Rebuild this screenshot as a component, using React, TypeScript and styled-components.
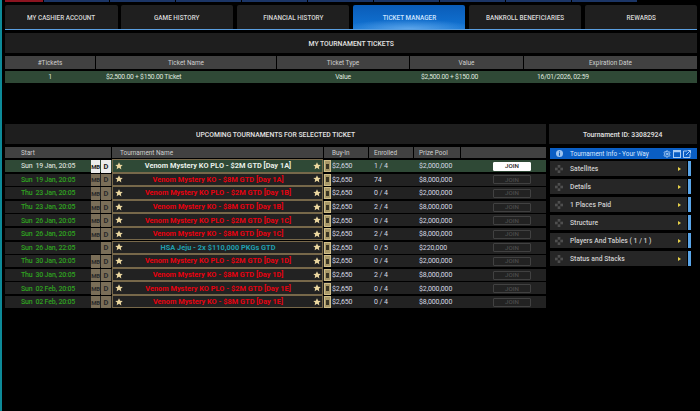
import React from "react";
import styled, { createGlobalStyle } from "styled-components";
import { Settings } from "lucide-react";

const Global = createGlobalStyle`
  html, body { margin: 0; padding: 0; background: #000; }
  * { box-sizing: border-box; }
`;

const Page = styled.div`
  width: 700px;
  height: 411px;
  overflow: hidden;
  background: #000;
  border-left: 2px solid #0d8a98;
  font-family: Roboto, "Liberation Sans", sans-serif;
  color: #e6e6e6;
  display: flex;
  flex-direction: column;
`;

const TopStrip = styled.div`
  height: 2px;
  display: flex;
  padding-left: 3px;
  gap: 1px;
`;
const StripPiece = styled.div<{ $w: number; $red?: boolean }>`
  width: ${p => p.$w}px;
  background: ${p => (p.$red ? "#8c1420" : "#1b3566")};
`;

const Tabs = styled.div`
  margin: 3px 3px 0 3px;
  display: flex;
  gap: 3.4px;
  height: 25px;
  border-bottom: 1px solid #5b9fe0;
`;
const Tab = styled.div<{ $active?: boolean }>`
  flex: 1;
  display: flex;
  align-items: center;
  justify-content: center;
  border-radius: 2px 2px 0 0;
  font-size: 7.5px;
  font-weight: 500;
  white-space: nowrap;
  color: ${p => (p.$active ? "#cfe4ff" : "#d8d8d8")};
  background: ${p =>
    p.$active
      ? "radial-gradient(ellipse 60% 40% at 50% 100%, #5ea6ea 0%, transparent 100%), linear-gradient(#0a5cb8, #1274d4)"
      : "#1f1f1f"};
`;

const Narrow = styled.span`
  display: inline-block;
  transform: scaleX(0.85);
`;

const Title = styled.div`
  height: 20px;
  background: #1e1e1e;
  display: flex;
  align-items: center;
  justify-content: center;
  font-size: 8px;
  font-weight: 500;
  white-space: nowrap;
  color: #e4e4e4;
`;

const TicketSection = styled.section`
  margin: 3px 3px 0 3px;
  height: 91px;
`;

const TicketHead = styled.div`
  margin-top: 3px;
  height: 13px;
  display: grid;
  grid-template-columns: 90px 180px 132px 113px 1fr;
  gap: 1px;
`;
const HeadCell = styled.div<{ $left?: number }>`
  background: #414141;
  font-size: 6.4px;
  color: #cfcfcf;
  display: flex;
  align-items: center;
  justify-content: ${p => (p.$left !== undefined ? "flex-start" : "center")};
  padding-left: ${p => p.$left ?? 0}px;
  white-space: nowrap;
`;
const TicketRow = styled.div`
  margin-top: 2px;
  height: 12px;
  display: grid;
  grid-template-columns: 90px 180px 132px 113px 1fr;
  gap: 1px;
  background: #2f4936;
`;
const TicketCell = styled.div<{ $left?: number }>`
  font-size: 6.8px;
  letter-spacing: -0.25px;
  color: #dfe6df;
  display: flex;
  align-items: center;
  justify-content: ${p => (p.$left !== undefined ? "flex-start" : "center")};
  padding-left: ${p => p.$left ?? 0}px;
  white-space: nowrap;
`;

const Lower = styled.div`
  margin: 0 3px 0 3px;
  display: flex;
  gap: 3px;
`;
const Tournaments = styled.section`
  width: 541px;
`;
const ListHead = styled.div`
  margin-top: 3px;
  height: 11px;
  display: grid;
  grid-template-columns: 106px 211px 44px 44px 46px 1fr;
  gap: 1px;
`;
const Rows = styled.div`
  margin-top: 2px;
  display: flex;
  flex-direction: column;
  gap: 1.6px;
`;
const Row = styled.div<{ $selected?: boolean }>`
  height: 12px;
  display: grid;
  grid-template-columns: 86px 21px 211px 9px 37px 50px 74px 1fr;
  align-items: center;
  background: ${p => (p.$selected ? "#2f4936" : "#222222")};
  font-size: 7px;
  letter-spacing: -0.1px;
  color: #d6d9e4;
`;
const StartCell = styled.div<{ $selected?: boolean }>`
  color: ${p => (p.$selected ? "#cfd8cf" : "#2fa320")};
  font-weight: 500;
  letter-spacing: -0.2px;
  padding-left: 16px;
  white-space: pre;
`;
const Badges = styled.div`
  display: flex;
  justify-content: flex-end;
  gap: 1px;
  height: 100%;
  padding-right: 1px;
`;
const Badge = styled.span<{ $wide?: boolean; $on?: boolean }>`
  width: ${p => (p.$wide ? 9 : 10)}px;
  display: flex;
  align-items: center;
  justify-content: center;
  font-size: ${p => (p.$wide ? 6 : 7.5)}px;
  font-weight: 700;
  letter-spacing: ${p => (p.$wide ? -0.4 : 0)}px;
  background: ${p => (p.$on ? "#ececec" : "#7a6e58")};
  color: ${p => (p.$on ? "#222" : "#2b2b2b")};
`;
const NameCell = styled.div<{ $selected?: boolean }>`
  height: 13.5px;
  margin-top: -1px;
  display: flex;
  align-items: center;
  padding: 0 1px 0 2px;
  border: 1px solid #77684a;
  background: ${p => (p.$selected ? "#2f4936" : "#222")};
`;
const NameText = styled.div<{ $tone: "white" | "red" | "teal" }>`
  flex: 1;
  text-align: center;
  font-size: 7.4px;
  font-weight: 700;
  letter-spacing: 0;
  white-space: nowrap;
  color: ${p => (p.$tone === "white" ? "#e8efe8" : p.$tone === "red" ? "#e8000f" : "#1f9fb0")};
`;
const Scroll = styled.span`
  width: 7px;
  height: 12px;
  margin-left: 1px;
  background: #a89868;
  border: 1px solid #d0be88;
  display: flex;
  align-items: center;
  justify-content: center;
  &::after {
    content: "";
    width: 3px;
    height: 5px;
    background: #3a3524;
  }
`;
const Plain = styled.div`
  white-space: nowrap;
`;
const EnrolledCell = styled.div`
  padding-left: 5px;
  white-space: nowrap;
`;
const PrizeCell = styled.div`
  white-space: nowrap;
`;
const JoinWrap = styled.div`
  display: flex;
`;
const Join = styled.button<{ $on?: boolean }>`
  width: 38px;
  height: 9px;
  padding: 0;
  font-family: inherit;
  font-size: 6.2px;
  font-weight: 500;
  border-radius: 1px;
  border: 1px solid ${p => (p.$on ? "#fff" : "#414141")};
  background: ${p => (p.$on ? "#fff" : "#222")};
  color: ${p => (p.$on ? "#222" : "#4b4b4b")};
  display: flex;
  align-items: center;
  justify-content: center;
`;

const Side = styled.aside`
  width: 148px;
`;
const InfoBar = styled.div`
  margin: 4px 0 0 1px;
  height: 11px;
  background: #0a5ec4;
  display: flex;
  align-items: center;
  padding: 0 6px 0 6px;
  font-size: 6.4px;
  color: #d9e8ff;
`;
const InfoLabel = styled.span`
  flex: 1;
  padding-left: 7px;
  white-space: nowrap;
`;
const InfoIcons = styled.span`
  display: flex;
  gap: 2px;
  align-items: center;
`;
const Items = styled.div`
  margin-top: 2px;
  display: flex;
  flex-direction: column;
  gap: 3px;
`;
const ItemRow = styled.div`
  display: flex;
  align-items: stretch;
  gap: 1px;
  height: 15px;
`;
const Item = styled.div`
  margin-left: 1px;
  width: 137px;
  background: #262626;
  display: flex;
  align-items: center;
  padding: 0 6px 0 5px;
  font-size: 6.8px;
  font-weight: 500;
  color: #cfcfcf;
`;
const ItemLabel = styled.span`
  flex: 1;
  padding-left: 7px;
  white-space: nowrap;
`;
const Arrow = styled.span`
  width: 0;
  height: 0;
  border-left: 3px solid #e8d24a;
  border-top: 2.5px solid transparent;
  border-bottom: 2.5px solid transparent;
`;
const Marker = styled.div`
  width: 3px;
  background: #5aa5e8;
`;

const Star = () => (
  <svg width="8" height="8" viewBox="0 0 24 24" style={{ flexShrink: 0 }}>
    <path fill="#ecd8a0" d="M12 1l3.4 7.2 7.8 1-5.7 5.4 1.5 7.8L12 17.6 5 21.4l1.5-7.8L.8 9.2l7.8-1z" />
  </svg>
);

const DragIcon = () => (
  <svg width="8" height="8" viewBox="0 0 9 9" style={{ flexShrink: 0 }}>
    <g fill="#4f4f4f">
      <rect x="3" y="0" width="3" height="3" />
      <rect x="0" y="3" width="3" height="3" />
      <rect x="6" y="3" width="3" height="3" />
      <rect x="3" y="6" width="3" height="3" />
    </g>
  </svg>
);

const InfoIcon = () => (
  <svg width="7" height="7" viewBox="0 0 16 16" style={{ flexShrink: 0 }}>
    <circle cx="8" cy="8" r="8" fill="#9cc4f0" />
    <rect x="6.8" y="7" width="2.4" height="6" fill="#0a5ec4" />
    <rect x="6.8" y="3.2" width="2.4" height="2.4" fill="#0a5ec4" />
  </svg>
);
const SquareIcon = () => (
  <svg width="8" height="8" viewBox="0 0 16 16">
    <rect x="1" y="1" width="14" height="14" fill="none" stroke="#a9cdf5" strokeWidth="2" />
    <rect x="1" y="1" width="14" height="3.5" fill="#a9cdf5" />
  </svg>
);
const PopIcon = () => (
  <svg width="8" height="8" viewBox="0 0 16 16" fill="none" stroke="#a9cdf5" strokeWidth="2">
    <path d="M8 2H1v13h13V8" />
    <path d="M6 10l9-9M9 1h6v6" />
  </svg>
);

type Tone = "white" | "red" | "teal";
interface T {
  day: string;
  date: string;
  name: string;
  enrolled: string;
  prize: string;
  tone: Tone;
  mb?: boolean;
}
const plo1 = "Venom Mystery KO PLO - $2M GTD";
const ko = "Venom Mystery KO - $8M GTD";
const rows: T[] = [
  { day: "Sun", date: "19 Jan, 20:05", name: `${plo1} [Day 1A]`, enrolled: "1 / 4", prize: "$2,000,000", tone: "white", mb: true },
  { day: "Sun", date: "19 Jan, 20:05", name: `${ko} [Day 1A]`, enrolled: "74", prize: "$8,000,000", tone: "red", mb: true },
  { day: "Thu", date: "23 Jan, 20:05", name: `${plo1} [Day 1B]`, enrolled: "0 / 4", prize: "$2,000,000", tone: "red", mb: true },
  { day: "Thu", date: "23 Jan, 20:05", name: `${ko} [Day 1B]`, enrolled: "2 / 4", prize: "$8,000,000", tone: "red", mb: true },
  { day: "Sun", date: "26 Jan, 20:05", name: `${plo1} [Day 1C]`, enrolled: "0 / 4", prize: "$2,000,000", tone: "red", mb: true },
  { day: "Sun", date: "26 Jan, 20:05", name: `${ko} [Day 1C]`, enrolled: "2 / 4", prize: "$8,000,000", tone: "red", mb: true },
  { day: "Sun", date: "26 Jan, 22:05", name: "HSA Jeju - 2x $110,000 PKGs GTD", enrolled: "0 / 5", prize: "$220,000", tone: "teal" },
  { day: "Thu", date: "30 Jan, 20:05", name: `${plo1} [Day 1D]`, enrolled: "0 / 4", prize: "$2,000,000", tone: "red", mb: true },
  { day: "Thu", date: "30 Jan, 20:05", name: `${ko} [Day 1D]`, enrolled: "2 / 4", prize: "$8,000,000", tone: "red", mb: true },
  { day: "Sun", date: "02 Feb, 20:05", name: `${plo1} [Day 1E]`, enrolled: "0 / 4", prize: "$2,000,000", tone: "red", mb: true },
  { day: "Sun", date: "02 Feb, 20:05", name: `${ko} [Day 1E]`, enrolled: "0 / 4", prize: "$8,000,000", tone: "red", mb: true },
];

const tabs = ["MY CASHIER ACCOUNT", "GAME HISTORY", "FINANCIAL HISTORY", "TICKET MANAGER", "BANKROLL BENEFICIARIES", "REWARDS"];
const items = ["Satellites", "Details", "1 Places Paid", "Structure", "Players And Tables ( 1 / 1 )", "Status and Stacks"];

export default function App() {
  return (
    <Page>
      <Global />
      <TopStrip>
        <StripPiece $w={38} $red />
        <StripPiece $w={65} />
        <StripPiece $w={65} />
        <StripPiece $w={65} />
        <StripPiece $w={65} />
        <StripPiece $w={65} />
        <StripPiece $w={65} />
        <StripPiece $w={65} />
        <StripPiece $w={65} />
        <StripPiece $w={65} />
      </TopStrip>
      <Tabs>
        {tabs.map((t, i) => (
          <Tab key={t} $active={i === 3}><Narrow>{t}</Narrow></Tab>
        ))}
      </Tabs>
      <TicketSection>
        <Title><Narrow>MY TOURNAMENT TICKETS</Narrow></Title>
        <TicketHead>
          <HeadCell>#Tickets</HeadCell>
          <HeadCell>Ticket Name</HeadCell>
          <HeadCell>Ticket Type</HeadCell>
          <HeadCell>Value</HeadCell>
          <HeadCell>Expiration Date</HeadCell>
        </TicketHead>
        <TicketRow>
          <TicketCell>1</TicketCell>
          <TicketCell $left={10}>$2,500.00 + $150.00 Ticket</TicketCell>
          <TicketCell>Value</TicketCell>
          <TicketCell $left={11}>$2,500.00 + $150.00</TicketCell>
          <TicketCell $left={13}>16/01/2026, 02:59</TicketCell>
        </TicketRow>
      </TicketSection>
      <Lower>
        <Tournaments>
          <Title><Narrow>UPCOMING TOURNAMENTS FOR SELECTED TICKET</Narrow></Title>
          <ListHead>
            <HeadCell $left={16}>Start</HeadCell>
            <HeadCell $left={8}>Tournament Name</HeadCell>
            <HeadCell $left={8}>Buy-In</HeadCell>
            <HeadCell $left={5}>Enrolled</HeadCell>
            <HeadCell $left={5}>Prize Pool</HeadCell>
            <HeadCell />
          </ListHead>
          <Rows>
            {rows.map((r, i) => (
              <Row key={i} $selected={i === 0}>
                <StartCell $selected={i === 0}>{`${r.day}  ${r.date}`}</StartCell>
                <Badges>
                  {r.mb && <Badge $wide $on={i === 0}>MB</Badge>}
                  <Badge $on={i === 0}>D</Badge>
                </Badges>
                <NameCell $selected={i === 0}>
                  <Star />
                  <NameText $tone={r.tone}>{r.name}</NameText>
                  <Star />
                </NameCell>
                <Scroll />
                <Plain>$2,650</Plain>
                <EnrolledCell>{r.enrolled}</EnrolledCell>
                <PrizeCell>{r.prize}</PrizeCell>
                <JoinWrap>
                  <Join $on={i === 0}>JOIN</Join>
                </JoinWrap>
              </Row>
            ))}
          </Rows>
        </Tournaments>
        <Side>
          <Title><Narrow>Tournament ID: 33082924</Narrow></Title>
          <InfoBar>
            <InfoIcon />
            <InfoLabel>Tournament Info - Your Way</InfoLabel>
            <InfoIcons>
              <Settings size={8} color="#a9cdf5" strokeWidth={3} />
              <SquareIcon />
              <PopIcon />
            </InfoIcons>
          </InfoBar>
          <Items>
            {items.map(t => (
              <ItemRow key={t}>
                <Item>
                  <DragIcon />
                  <ItemLabel>{t}</ItemLabel>
                  <Arrow />
                </Item>
                <Marker />
              </ItemRow>
            ))}
          </Items>
        </Side>
      </Lower>
    </Page>
  );
}
